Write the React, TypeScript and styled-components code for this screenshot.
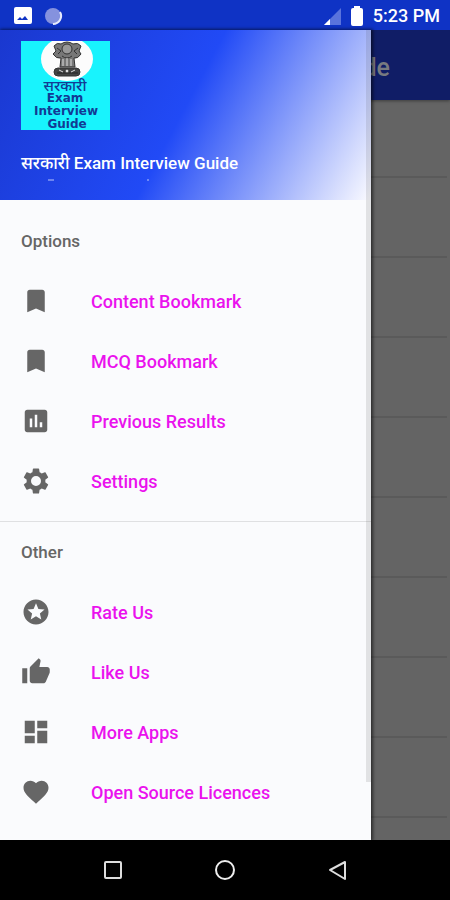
import React from "react";
import styled, { createGlobalStyle } from "styled-components";
import {
  MdBookmark,
  MdAssessment,
  MdStars,
  MdThumbUp,
  MdDashboard,
  MdFavorite,
} from "react-icons/md";

const GlobalStyle = createGlobalStyle`
  * { box-sizing: border-box; }
  body {
    margin: 0;
    background: #000;
    font-family: Roboto, "Noto Sans", sans-serif;
  }
`;

const Page = styled.div`
  display: flex;
  flex-direction: column;
  min-height: 100vh;
`;

const StatusBar = styled.header`
  display: flex;
  align-items: center;
  justify-content: space-between;
  height: 30px;
  padding: 2px 10px 0 14px;
  background: #0f33c5;
`;

const StatusGroup = styled.div<{ $gap: number }>`
  display: flex;
  align-items: center;
  gap: ${(p) => p.$gap}px;
`;

const Clock = styled.time`
  color: #fff;
  font-size: 18px;
  font-weight: 500;
  line-height: 28px;
`;

const Stage = styled.div`
  display: grid;
  flex: 1;
  grid-template-columns: 1fr;
`;

const Screen = styled.main`
  grid-area: 1 / 1;
  min-width: 0;
  overflow: hidden;
  background: #646464;
`;

const Toolbar = styled.div`
  display: flex;
  align-items: center;
  height: 70px;
  padding: 2px 60px 0 0;
  justify-content: flex-end;
  background: #101d66;
  box-shadow: 0 1px 3px rgba(0, 0, 0, 0.4);
`;

const ToolbarTitle = styled.h1`
  margin: 0;
  color: #787a80;
  font-size: 25px;
  font-weight: 500;
  white-space: nowrap;
`;

const TopicList = styled.ul`
  margin: 0;
  padding: 0 3px 0 0;
  list-style: none;
`;

const Topic = styled.li`
  height: 80px;
  border-bottom: 2px solid #5a5a5a;

  &:first-child {
    height: 78px;
  }
`;

const Drawer = styled.aside`
  position: relative;
  grid-area: 1 / 1;
  width: calc(100% - 79px);
  background: #fafbfd;
  box-shadow: 1px 0 3px 1px rgba(0, 0, 0, 0.55);
`;

const ScrollThumb = styled.div`
  position: absolute;
  top: 0;
  right: 0;
  bottom: 58px;
  width: 5px;
  background: rgba(60, 60, 60, 0.13);
`;

const Profile = styled.div`
  display: flex;
  flex-direction: column;
  height: 170px;
  padding: 11px 20px 0 21px;
  background: linear-gradient(118deg, #1a38cf 0%, #214af6 49%, #fbfbff 100%);
`;

const AppName = styled.p`
  margin: 20px 0 3px;
  color: #fff;
  font-size: 17px;
  font-weight: 500;
  line-height: 26px;
  white-space: nowrap;
`;

const Section = styled.section`
  padding: 0 20px 10px 21px;

  & + & {
    padding-bottom: 18px;
    border-top: 1px solid #dfe0e2;
  }

  &:first-of-type {
    padding-top: 11px;
  }
`;

const SectionTitle = styled.h2`
  margin: 0;
  color: #666;
  font-size: 17px;
  font-weight: 500;
  line-height: 60px;
`;

const MenuLink = styled.a`
  display: flex;
  align-items: center;
  gap: 40px;
  height: 60px;
  color: #ea12ee;
  font-size: 18px;
  font-weight: 500;
  text-decoration: none;

  svg {
    color: #666;
  }
`;

const NavBar = styled.nav`
  display: flex;
  align-items: center;
  justify-content: center;
  gap: 82px;
  height: 60px;
  background: #000;
`;

const NavButton = styled.button`
  display: flex;
  width: 30px;
  height: 30px;
  padding: 0;
  border: 0;
  background: none;
`;

const AppLogo = () => (
  <svg width="89" height="89" viewBox="0 0 89 89" role="img" aria-label="App logo">
    <defs>
      <clipPath id="tile">
        <rect width="89" height="89" />
      </clipPath>
    </defs>
    <g clipPath="url(#tile)">
      <rect width="89" height="89" fill="#18f3fd" />
      <ellipse cx="46" cy="18" rx="26" ry="22" fill="#fcfcfc" />
      <g fill="#777" stroke="#333" strokeWidth="1">
        <path d="M33 5 Q36 1 40 3 Q46 -1 52 3 Q57 1 60 5 L58 10 L60 13 Q57 18 53 17 L54 26 H39 L40 17 Q35 18 32 13 L35 10 Z" />
        <circle cx="46" cy="8" r="5" fill="#999" />
        <path d="M36 7 l4 3 -3 3 M57 7 l-4 3 3 3 M41 15 q5 4 10 0" fill="none" />
        <path d="M42 18 v7 M46 17 v8 M50 18 v7" stroke="#ddd" />
        <rect x="33" y="27" width="26" height="8" rx="4" fill="#444" />
        <path d="M36 32 h21" stroke="#222" />
        <circle cx="46" cy="30" r="2" fill="#ddd" />
        <path d="M38 29 l4 2 M54 29 l-4 2" stroke="#ddd" />
      </g>
      <g
        fill="#123a94"
        fontFamily='"DejaVu Sans", "Noto Sans", sans-serif'
        fontSize="12"
        fontWeight="700"
        textAnchor="middle"
      >
        <text x="44" y="50" fontSize="15" fontWeight="500">सरकारी</text>
        <text x="44" y="61">Exam</text>
        <text x="45" y="74">Interview</text>
        <text x="46" y="87">Guide</text>
      </g>
    </g>
  </svg>
);

const PictureIcon = () => (
  <svg width="18" height="18" viewBox="0 0 18 18" aria-hidden="true">
    <rect width="18" height="17" rx="2" fill="#fff" />
    <path d="M3 13 L6 10 L8 12 L11 9 L14 13 Z" fill="#0f33c5" />
  </svg>
);

const SyncIcon = () => (
  <svg width="19" height="19" viewBox="0 0 19 19" aria-hidden="true">
    <circle cx="9" cy="9" r="8" fill="#8592de" />
    <path d="M16 5 A8 8 0 0 1 9 17" fill="none" stroke="#e6eafc" strokeWidth="2" />
  </svg>
);

const SignalIcon = () => (
  <svg width="17" height="17" viewBox="0 0 17 17" aria-hidden="true">
    <path d="M17 0 V17 H0 Z" fill="#5a73dc" />
    <path d="M6 11 V17 H0 Z" fill="#fff" />
  </svg>
);

const BatteryIcon = () => (
  <svg width="12" height="20" viewBox="0 0 12 20" aria-hidden="true">
    <path d="M3 2 V0 H9 V2 H10 Q12 2 12 4 V18 Q12 20 10 20 H2 Q0 20 0 18 V4 Q0 2 2 2 Z" fill="#fff" />
  </svg>
);

const SubtitleEdge = () => (
  <svg width="140" height="2" viewBox="0 0 140 2" aria-hidden="true">
    <path d="M27 1 h6 M126 1 h2" stroke="#b9c5fb" />
  </svg>
);

const GearIcon = ({ size = 30 }: { size?: number }) => (
  <svg width={size} height={size} viewBox="0 0 24 24" fill="currentColor" aria-hidden="true">
    <path
      fillRule="evenodd"
      d="M19.43 12.98c.04-.32.07-.64.07-.98s-.03-.66-.07-.98l2.11-1.65c.19-.15.24-.42.12-.64l-2-3.46c-.12-.22-.39-.3-.61-.22l-2.49 1c-.52-.4-1.08-.73-1.69-.98l-.38-2.65C14.46 2.18 14.25 2 14 2h-4c-.25 0-.46.18-.49.42l-.38 2.65c-.61.25-1.17.59-1.69.98l-2.49-1c-.23-.09-.49 0-.61.22l-2 3.46c-.13.22-.07.49.12.64l2.11 1.65c-.04.32-.07.65-.07.98s.03.66.07.98l-2.11 1.65c-.19.15-.24.42-.12.64l2 3.46c.12.22.39.3.61.22l2.49-1c.52.4 1.08.73 1.69.98l.38 2.65c.03.24.24.42.49.42h4c.25 0 .46-.18.49-.42l.38-2.65c.61-.25 1.17-.59 1.69-.98l2.49 1c.23.09.49 0 .61-.22l2-3.46c.12-.22.07-.49-.12-.64l-2.11-1.65zM12 16a4 4 0 1 1 0-8 4 4 0 0 1 0 8z"
    />
  </svg>
);

type Item = { label: string; icon: React.ComponentType<{ size?: number }> };

const sections: { title: string; items: Item[] }[] = [
  {
    title: "Options",
    items: [
      { label: "Content Bookmark", icon: MdBookmark },
      { label: "MCQ Bookmark", icon: MdBookmark },
      { label: "Previous Results", icon: MdAssessment },
      { label: "Settings", icon: GearIcon },
    ],
  },
  {
    title: "Other",
    items: [
      { label: "Rate Us", icon: MdStars },
      { label: "Like Us", icon: MdThumbUp },
      { label: "More Apps", icon: MdDashboard },
      { label: "Open Source Licences", icon: MdFavorite },
    ],
  },
];

const topics = Array.from({ length: 9 }, (_, i) => i);

export default function App() {
  return (
    <>
      <GlobalStyle />
      <Page>
        <StatusBar>
          <StatusGroup $gap={12}>
            <PictureIcon />
            <SyncIcon />
          </StatusGroup>
          <StatusGroup $gap={10}>
            <SignalIcon />
            <BatteryIcon />
            <Clock>5:23 PM</Clock>
          </StatusGroup>
        </StatusBar>
        <Stage>
          <Screen>
            <Toolbar>
              <ToolbarTitle>सरकारी Exam Interview Guide</ToolbarTitle>
            </Toolbar>
            <TopicList>
              {topics.map((t) => (
                <Topic key={t} />
              ))}
            </TopicList>
          </Screen>
          <Drawer>
            <Profile>
              <AppLogo />
              <AppName>सरकारी Exam Interview Guide</AppName>
              <SubtitleEdge />
            </Profile>
            {sections.map((s) => (
              <Section key={s.title}>
                <SectionTitle>{s.title}</SectionTitle>
                {s.items.map(({ label, icon: Icon }) => (
                  <MenuLink key={label} href="#">
                    <Icon size={30} />
                    {label}
                  </MenuLink>
                ))}
              </Section>
            ))}
            <ScrollThumb />
          </Drawer>
        </Stage>
        <NavBar>
          <NavButton aria-label="Recent apps">
            <svg width="30" height="30" viewBox="0 0 30 30">
              <rect x="7" y="7" width="16" height="16" rx="1" fill="none" stroke="#ddd" strokeWidth="2" />
            </svg>
          </NavButton>
          <NavButton aria-label="Home">
            <svg width="30" height="30" viewBox="0 0 30 30">
              <circle cx="15" cy="15" r="9" fill="none" stroke="#eee" strokeWidth="2" />
            </svg>
          </NavButton>
          <NavButton aria-label="Back">
            <svg width="30" height="30" viewBox="0 0 30 30">
              <path d="M23 7 V24 L8 15 Z" fill="none" stroke="#ddd" strokeWidth="2" strokeLinejoin="round" />
            </svg>
          </NavButton>
        </NavBar>
      </Page>
    </>
  );
}
